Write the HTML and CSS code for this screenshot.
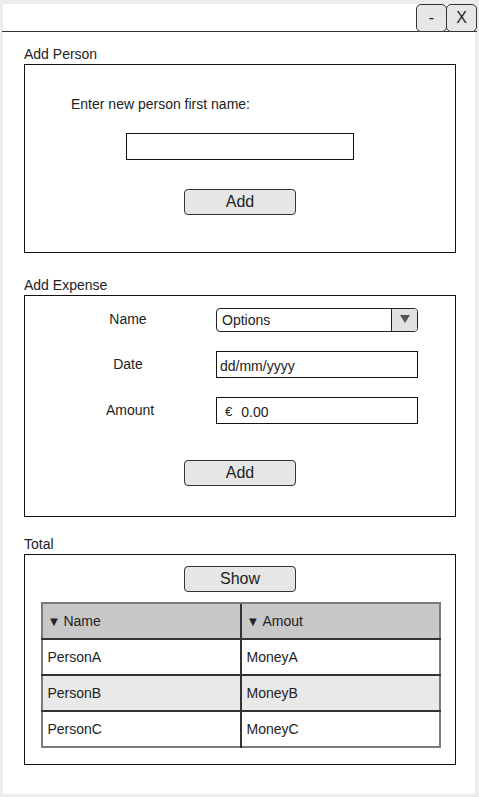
FILE: index.html
```html
<!DOCTYPE html>
<html>
<head>
<meta charset="utf-8">
<link rel="stylesheet" href="styles.css">
</head>
<body>
<div class="window">
  <div class="titlebar">
    <div class="tbtn">-</div>
    <div class="tbtn">X</div>
  </div>
  <div class="content">
    <div class="label l1">Add Person</div>
    <div class="box box1">
      <div class="prompt">Enter new person first name:</div>
      <div class="input name-input"></div>
      <div class="btn add1">Add</div>
    </div>

    <div class="label l2">Add Expense</div>
    <div class="box box2">
      <div class="form">
        <div class="flabel">Name</div>
        <div class="select"><span class="sel-text">Options</span><span class="sel-arrow"><svg width="10" height="8" viewBox="0 0 10 8"><polygon points="0,0 10,0 5,8" fill="#555"/></svg></span></div>
        <div class="flabel">Date</div>
        <div class="input field">dd/mm/yyyy</div>
        <div class="flabel amt">Amount</div>
        <div class="input field money"><span class="euro">€</span>0.00</div>
      </div>
      <div class="btn add2">Add</div>
    </div>

    <div class="label l3">Total</div>
    <div class="box box3">
      <div class="btn show">Show</div>
      <table class="grid">
        <tr class="head"><td><span class="tri">▼</span>Name</td><td><span class="tri">▼</span>Amout</td></tr>
        <tr><td>PersonA</td><td>MoneyA</td></tr>
        <tr class="alt"><td>PersonB</td><td>MoneyB</td></tr>
        <tr><td>PersonC</td><td>MoneyC</td></tr>
      </table>
    </div>
  </div>
</div>
</body>
</html>
```

FILE: styles.css
```css
* { box-sizing: border-box; }
html, body { margin: 0; padding: 0; }
body {
  background: #ececec;
  font-family: "Liberation Sans", Arial, sans-serif;
  color: #222;
  width: 479px;
  height: 797px;
  overflow: hidden;
  padding: 4px 0 0 3px;
}
.window {
  width: 472px;
  height: 790px;
  background: #fff;
}
.titlebar {
  height: 28px;
  border-bottom: 1px solid #333;
  display: flex;
  justify-content: flex-end;
  margin-left: -1px;
  margin-right: -2px;
}
.tbtn {
  width: 31px;
  height: 28px;
  background: #e6e6e6;
  border: 1px solid #333;
  border-radius: 5px;
  font-size: 16px;
  display: flex;
  align-items: center;
  justify-content: center;
  margin-left: -1px;
  color: #222;
}
.content {
  padding-left: 21px;
}
.label {
  font-size: 14px;
  line-height: 17px;
  height: 17px;
}
.l1 { margin-top: 14px; margin-bottom: 1px; }
.l2 { margin-top: 24px; margin-bottom: 1px; }
.l3 { margin-top: 19px; margin-bottom: 1px; }
.box {
  width: 432px;
  border: 1px solid #111;
}
.box1 {
  height: 189px;
  display: flex;
  flex-direction: column;
  align-items: center;
  padding-top: 31px;
}
.prompt {
  align-self: flex-start;
  margin-left: 46px;
  font-size: 14px;
  line-height: 16px;
}
.input {
  border: 1px solid #111;
  background: #fff;
}
.name-input {
  width: 228px;
  height: 27px;
  margin-top: 21px;
}
.btn {
  width: 112px;
  height: 26px;
  background: #e6e6e6;
  border: 1px solid #333;
  border-radius: 4px;
  font-size: 16px;
  display: flex;
  align-items: center;
  justify-content: center;
  color: #222;
}
.add1 { margin-top: 29px; }
.box2 {
  height: 222px;
  display: flex;
  flex-direction: column;
  align-items: center;
  padding-top: 12px;
}
.form {
  align-self: stretch;
  display: grid;
  grid-template-columns: 94px 202px;
  column-gap: 41px;
  row-gap: 19px;
  padding-left: 56px;
  align-items: center;
  font-size: 14px;
}
.flabel {
  text-align: center;
  line-height: 16px;
  margin-top: -2px;
}
.amt { margin-left: 4px; }
.select {
  height: 24px;
  border: 1px solid #222;
  border-radius: 4px;
  display: flex;
  align-items: stretch;
}
.sel-text {
  flex: 1;
  padding-left: 5px;
  display: flex;
  align-items: center;
}
.sel-arrow {
  width: 26px;
  background: #e2e2e2;
  border-left: 1px solid #222;
  border-radius: 0 3px 3px 0;
  display: flex;
  align-items: center;
  justify-content: center;
  padding-bottom: 2px;
}
.field {
  height: 27px;
  display: flex;
  align-items: center;
  padding-left: 3px;
  padding-top: 2px;
}
.money { padding-left: 8px; }
.euro { margin-right: 9px; font-size: 13px; }
.add2 { margin-top: 36px; }
.box3 {
  height: 211px;
  display: flex;
  flex-direction: column;
  align-items: center;
  padding-top: 11px;
}
.show { margin-bottom: 10px; height: 26px; }
.grid {
  border-collapse: collapse;
  width: 400px;
  margin-left: 1px;
  font-size: 14px;
  border: 2px solid #7a7a7a;
}
.grid td {
  height: 36px;
  padding: 0 0 0 5px;
  border-top: 2px solid #333;
  vertical-align: middle;
  width: 50%;
}
.grid td + td {
  border-left: 2px solid #333;
}
.grid tr.head td {
  background: #c8c8c8;
  border-top: 2px solid #7a7a7a;
}
.grid tr.alt td { background: #e9e9e9; }
.tri {
  font-size: 13px;
  margin-right: 3px;
}
```
